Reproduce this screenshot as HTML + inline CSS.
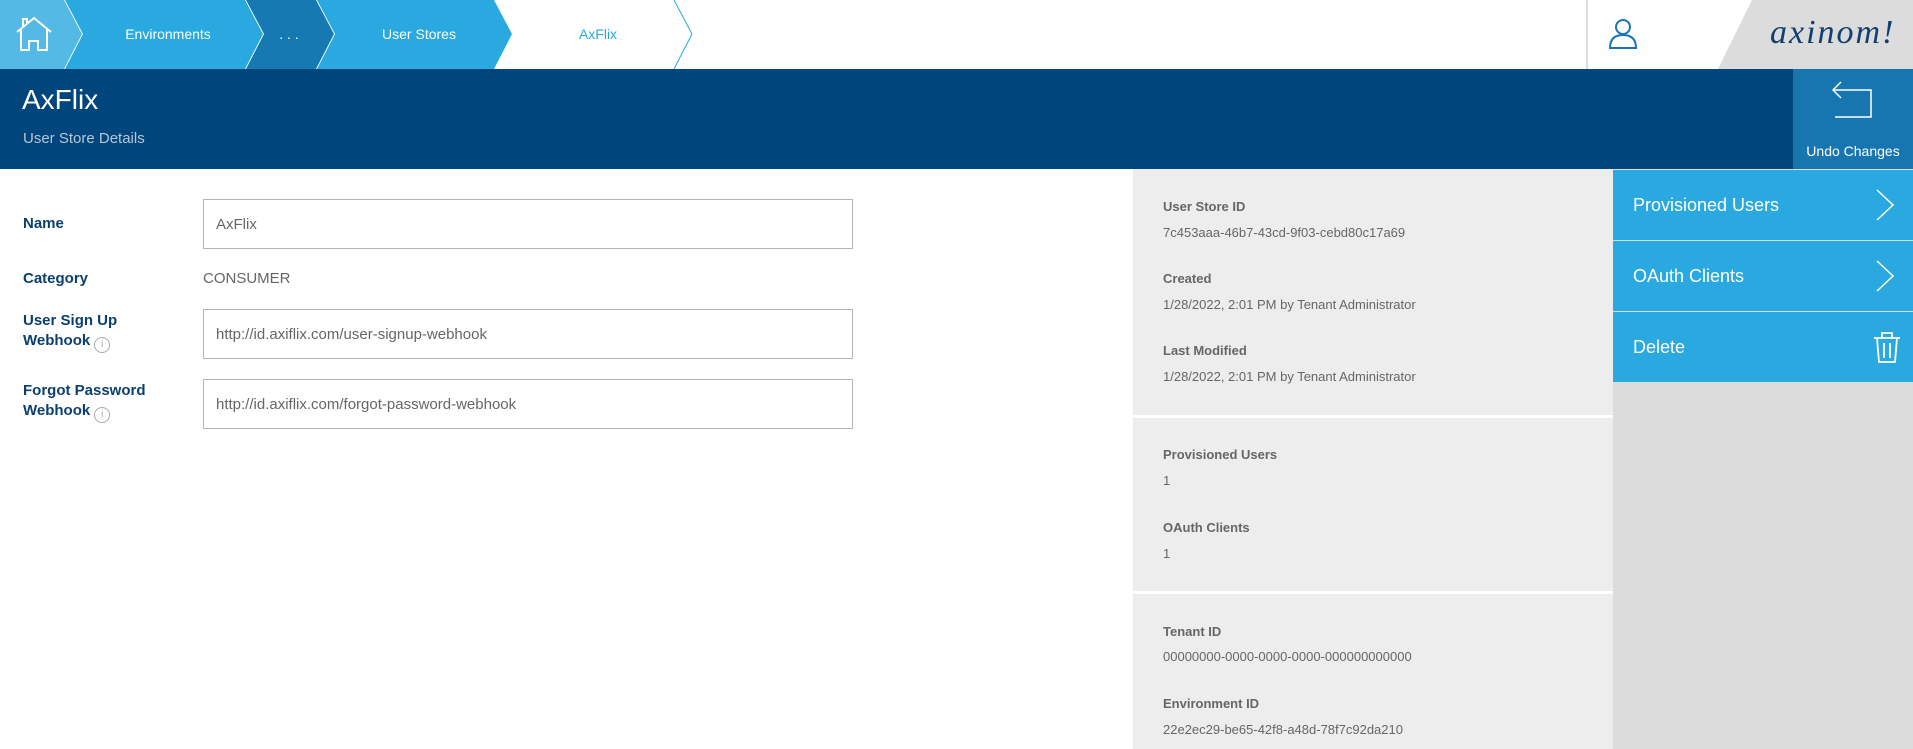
<!DOCTYPE html>
<html><head><meta charset="utf-8"><style>
*{margin:0;padding:0;box-sizing:border-box}
body{width:1913px;height:749px;overflow:hidden;background:#fff;font-family:"Liberation Sans",Arial,sans-serif;position:relative}
.abs{position:absolute}
.lbl{position:absolute;left:23px;color:#0b3f6f;font-weight:bold;font-size:15px;line-height:20px}
.inp{position:absolute;left:203px;width:650px;border:1px solid #b5b5b5;color:#666;font-size:15px;padding-left:12px;display:flex;align-items:center}
.il{position:absolute;left:1163px;font-size:13px;font-weight:bold;color:#666}
.iv{position:absolute;left:1163px;font-size:13px;color:#666}
.btn{position:absolute;left:1613px;width:300px;height:70px;background:#29a9e0;color:#fff;font-size:18px;padding-left:20px;display:flex;align-items:center}
.info{display:inline-block;width:16px;height:16px;border:1.5px solid #aaa;border-radius:50%;color:#aaa;font-size:10px;font-weight:normal;text-align:center;line-height:13px;vertical-align:-2px;margin-left:4px}
</style></head><body>
<svg class="abs" style="left:0;top:0" width="720" height="69">
<polygon points="0,0 64,0 82,34 64,69 0,69" fill="#55b9e6"/>
<polygon points="65,0 245,0 263,34 245,69 65,69 83,34" fill="#29a9e0"/>
<polygon points="246,0 316,0 334,34 316,69 246,69 264,34" fill="#1779b1"/>
<polygon points="317,0 494,0 512,34 494,69 317,69 335,34" fill="#29a9e0"/>
<polyline points="674,0 692,34 674,69" fill="none" stroke="#29a9e0" stroke-width="1"/>
<g fill="none" stroke="#fff" stroke-width="2">
<polyline points="17,32 34,18 51,32"/>
<polyline points="21,29 21,50 29,50 29,41 38,41 38,50 47,50 47,29"/>
<polyline points="23,26 23,19 27,19 27,23"/>
</g>
<text x="168" y="39" fill="#fff" font-size="14" text-anchor="middle" font-family="Liberation Sans">Environments</text>
<text x="289" y="39" fill="#fff" font-size="14" text-anchor="middle" font-family="Liberation Sans">. . .</text>
<text x="419" y="39" fill="#fff" font-size="14" text-anchor="middle" font-family="Liberation Sans">User Stores</text>
<text x="598" y="39" fill="#29a9e0" font-size="14" text-anchor="middle" font-family="Liberation Sans">AxFlix</text>
</svg>
<div class="abs" style="left:1586px;top:0;width:2px;height:69px;background:#ddd"></div>
<svg class="abs" style="left:1608px;top:18px" width="30" height="32"><circle cx="15" cy="9" r="7" fill="none" stroke="#1a75b5" stroke-width="2"/><path d="M2,30 Q2,17 15,17 Q28,17 28,30 Z" fill="none" stroke="#1a75b5" stroke-width="2"/></svg>
<div class="abs" style="left:1718px;top:0;width:195px;height:69px;background:#dcdcdc;clip-path:polygon(34px 0,195px 0,195px 69px,0 69px)"></div>
<div class="abs" style="left:1770px;top:14px;font-family:'Liberation Serif',serif;font-style:italic;font-size:34px;color:#123f70;letter-spacing:2px">axinom!</div>
<div class="abs" style="left:0;top:69px;width:1913px;height:100px;background:#00467c"></div>
<div class="abs" style="left:22px;top:84px;color:#fff;font-size:28px">AxFlix</div>
<div class="abs" style="left:23px;top:130px;color:#b9c6d6;font-size:15px">User Store Details</div>
<div class="abs" style="left:1793px;top:69px;width:120px;height:100px;background:#1776b0"></div>
<svg class="abs" style="left:1830px;top:80px" width="45" height="40"><g fill="none" stroke="#fff" stroke-width="1.5"><polyline points="3,10 41,10 41,37 5,37"/><polyline points="11,2 3,10 11,18"/></g></svg>
<div class="abs" style="left:1793px;top:143px;width:120px;text-align:center;color:#fff;font-size:14px">Undo Changes</div>

<div class="lbl" style="top:214px">Name</div>
<div class="inp" style="top:199px;height:50px">AxFlix</div>
<div class="lbl" style="top:269px">Category</div>
<div class="abs" style="left:203px;top:270px;color:#666;font-size:15px">CONSUMER</div>
<div class="lbl" style="top:311px">User Sign Up<br>Webhook<span class="info">i</span></div>
<div class="inp" style="top:309px;height:50px">http://id.axiflix.com/user-signup-webhook</div>
<div class="lbl" style="top:381px">Forgot Password<br>Webhook<span class="info">i</span></div>
<div class="inp" style="top:379px;height:50px">http://id.axiflix.com/forgot-password-webhook</div>

<div class="abs" style="left:1133px;top:169px;width:480px;height:580px;background:#ededed"></div>
<div class="abs" style="left:1133px;top:415px;width:480px;height:3px;background:#fff"></div>
<div class="abs" style="left:1133px;top:591px;width:480px;height:3px;background:#fff"></div>
<div class="il" style="top:199px">User Store ID</div><div class="iv" style="top:225px">7c453aaa-46b7-43cd-9f03-cebd80c17a69</div>
<div class="il" style="top:271px">Created</div><div class="iv" style="top:297px">1/28/2022, 2:01 PM by Tenant Administrator</div>
<div class="il" style="top:343px">Last Modified</div><div class="iv" style="top:369px">1/28/2022, 2:01 PM by Tenant Administrator</div>
<div class="il" style="top:447px">Provisioned Users</div><div class="iv" style="top:473px">1</div>
<div class="il" style="top:520px">OAuth Clients</div><div class="iv" style="top:546px">1</div>
<div class="il" style="top:624px">Tenant ID</div><div class="iv" style="top:649px">00000000-0000-0000-0000-000000000000</div>
<div class="il" style="top:696px">Environment ID</div><div class="iv" style="top:722px">22e2ec29-be65-42f8-a48d-78f7c92da210</div>

<div class="abs" style="left:1613px;top:169px;width:300px;height:580px;background:#dcdcdc"></div>
<div class="btn" style="top:170px">Provisioned Users</div>
<div class="btn" style="top:241px">OAuth Clients</div>
<div class="btn" style="top:312px">Delete</div>
<svg class="abs" style="left:1875px;top:188px" width="22" height="34"><polyline points="2,2 18,17 2,32" fill="none" stroke="#fff" stroke-width="1.5"/></svg>
<svg class="abs" style="left:1875px;top:259px" width="22" height="34"><polyline points="2,2 18,17 2,32" fill="none" stroke="#fff" stroke-width="1.5"/></svg>
<svg class="abs" style="left:1872px;top:331px" width="30" height="34"><g fill="none" stroke="#fff" stroke-width="1.8"><line x1="2" y1="7" x2="28" y2="7"/><polyline points="10,7 10,2 20,2 20,7"/><polyline points="5,7 7,31 23,31 25,7"/><line x1="12" y1="12" x2="12" y2="27"/><line x1="18" y1="12" x2="18" y2="27"/></g></svg>
</body></html>
